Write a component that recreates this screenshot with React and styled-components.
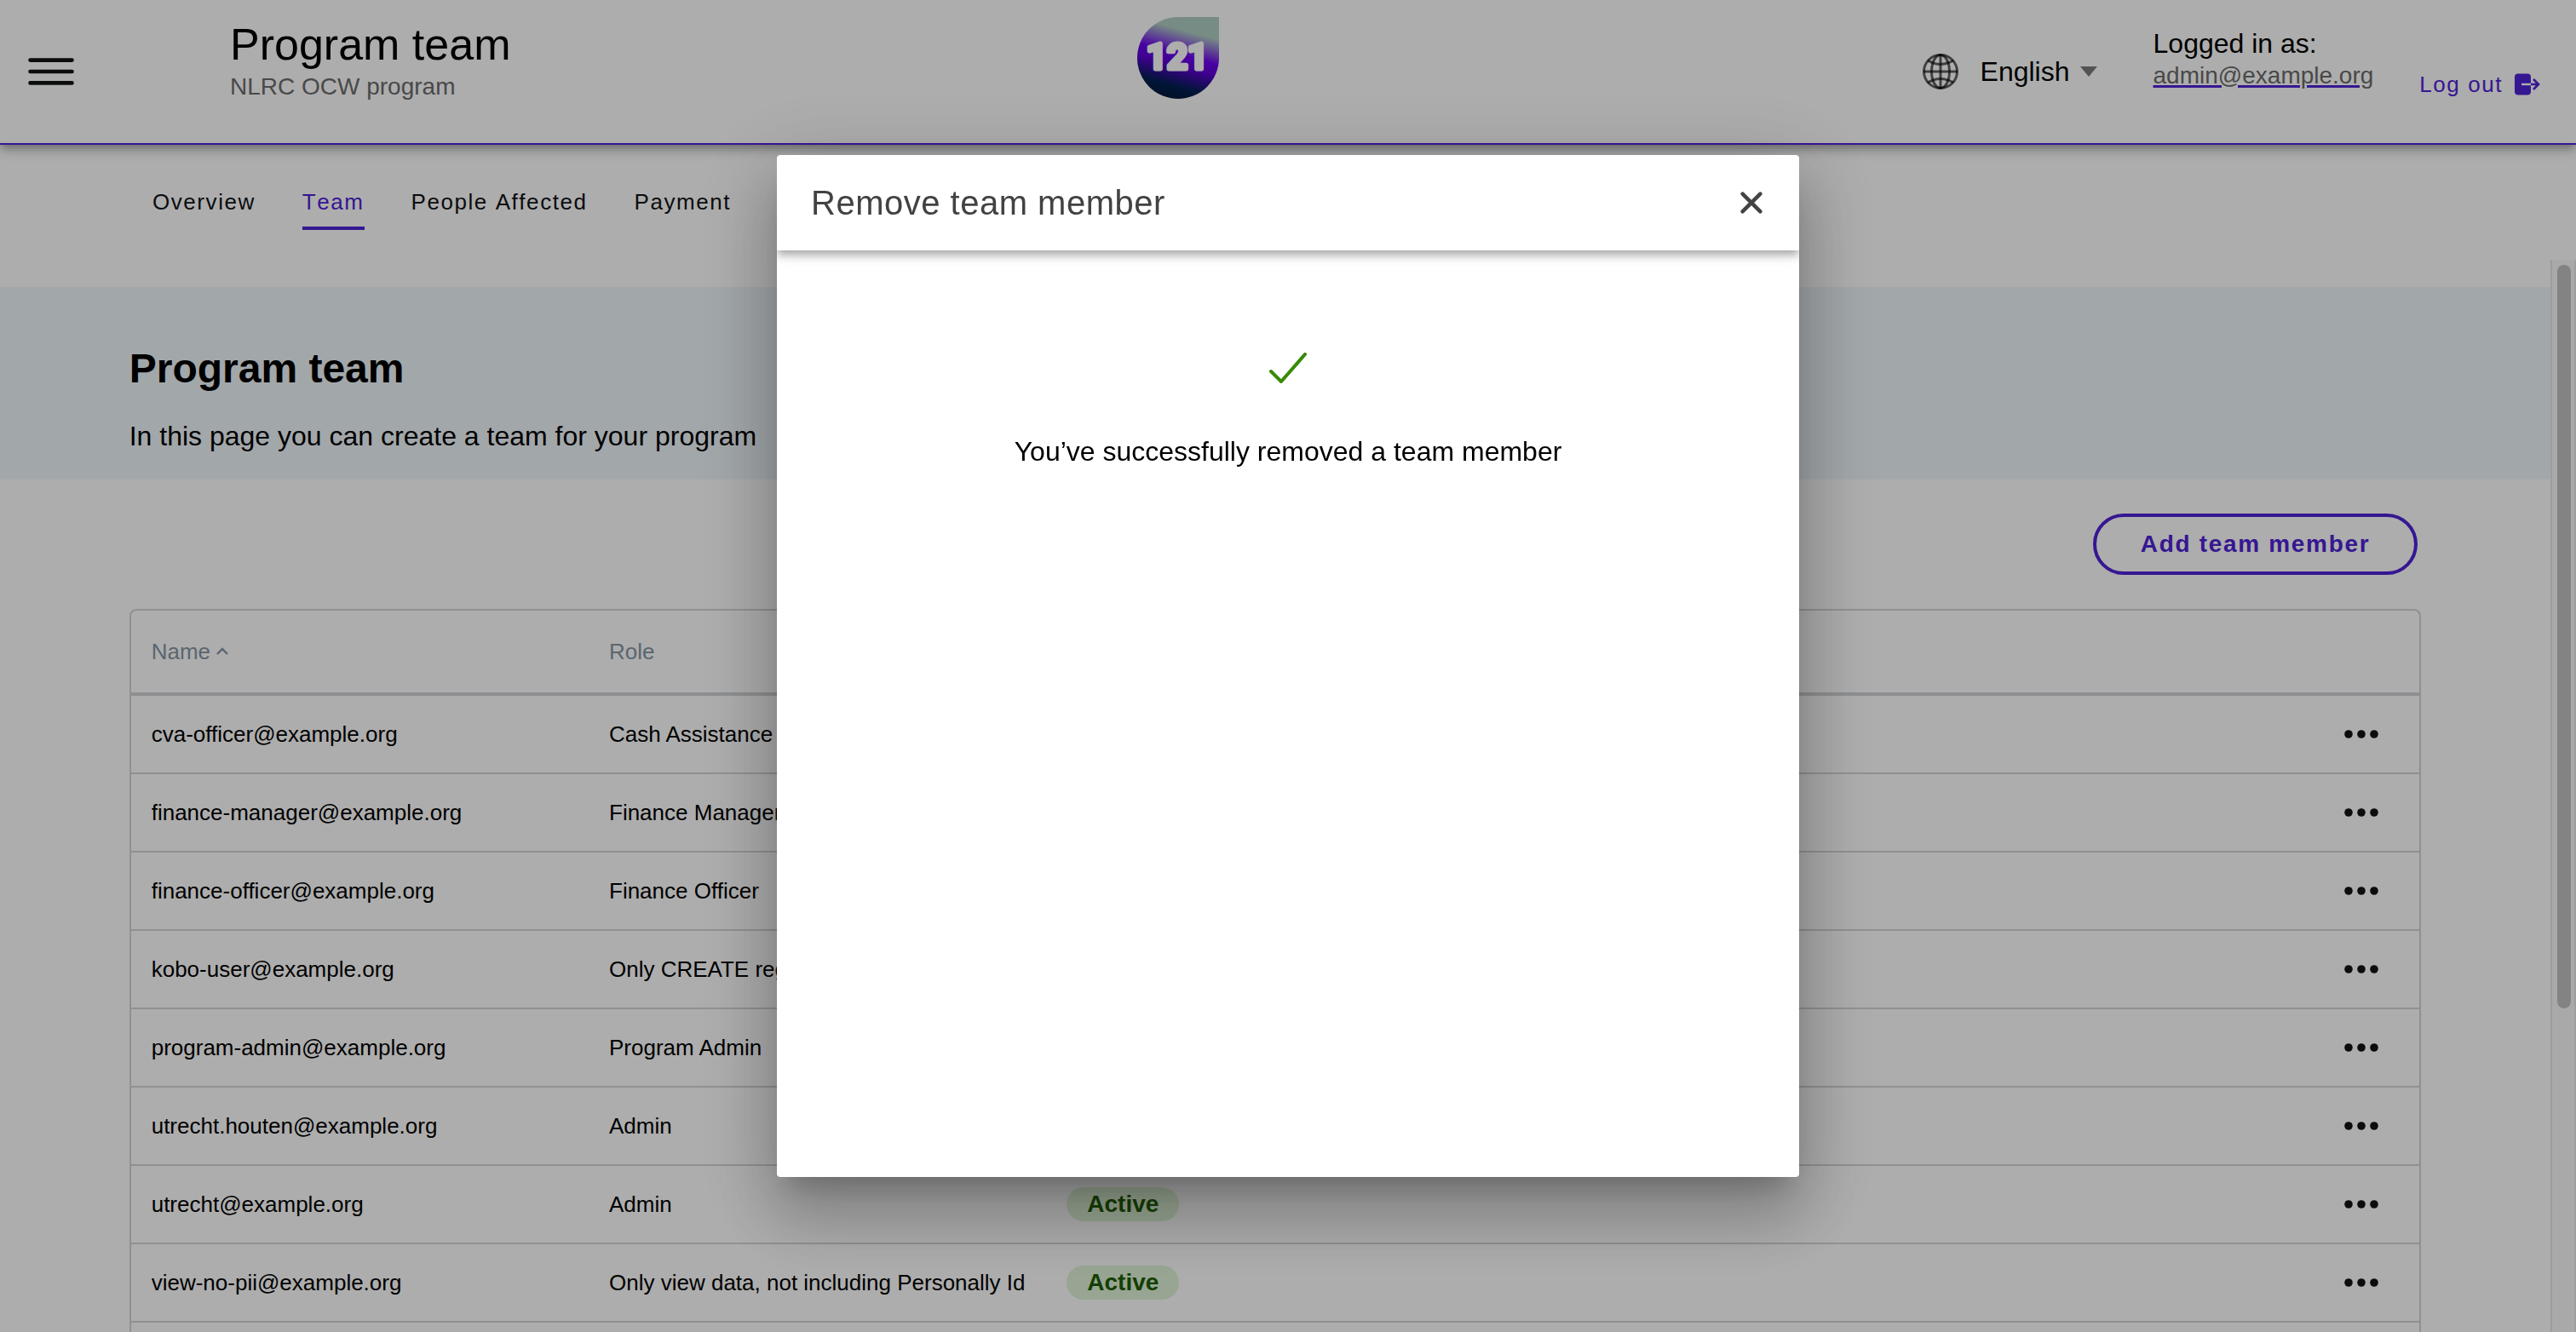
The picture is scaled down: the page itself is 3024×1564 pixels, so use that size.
import React from "react";
import styled, { createGlobalStyle } from "styled-components";

const primary = "#4f22d7";
const line = "#d5d5d6";

const GlobalStyle = createGlobalStyle`
  *, *::before, *::after { box-sizing: border-box; }
  body {
    margin: 0;
    overflow: hidden;
    background: #fff;
    color: #000;
    font-family: "Liberation Sans", Arial, Helvetica, sans-serif;
    font-size: 26px;
  }
  h1, h2, p { margin: 0; }
  svg { display: block; flex: none; }
  button, select { font: inherit; color: inherit; background: none; border: 0; padding: 0; margin: 0; cursor: pointer; }
`;

const Page = styled.div`
  display: flex;
  flex-direction: column;
  height: 100vh;
`;

const Header = styled.header`
  display: grid;
  grid-template-columns: 19fr 24fr;
  align-items: center;
  height: 170px;
  flex: none;
  padding: 0 42px 0 32px;
  border-bottom: 2px solid ${primary};
  box-shadow: 0 4px 8px -2px rgba(0, 0, 0, 0.2), 0 8px 10px rgba(0, 0, 0, 0.14), 0 2px 20px rgba(0, 0, 0, 0.12);
`;

const HeaderGroup = styled.div`
  display: flex;
  align-items: center;
  gap: ${(p) => p.$gap}px;
  height: 100%;
`;

const IconButton = styled.button`
  display: flex;
  align-items: center;
  justify-content: center;
`;

const TitleBlock = styled.div`
  padding-bottom: 24px;
`;

const AppTitle = styled.p`
  font-size: 52px;
  line-height: 60px;
`;

const ProgramName = styled.p`
  font-size: 28px;
  line-height: 40px;
  color: #6c6c6c;
`;

const Logo = styled.a`
  padding-bottom: 32px;
  margin-right: auto;
`;

const Language = styled.label`
  display: flex;
  align-items: center;
  gap: 26px;
  margin-right: 66px;
`;

const LanguageField = styled.span`
  display: flex;
  align-items: center;
  gap: 12px;
`;

const LanguageSelect = styled.select`
  appearance: none;
  font-size: 32px;
  line-height: 40px;
`;

const Account = styled.div`
  padding-bottom: 30px;
  margin-right: 54px;
  font-size: 32px;
  line-height: 40px;
`;

const Email = styled.p`
  font-size: 28px;
  line-height: 36px;
  color: #6c6c6c;
  text-decoration: underline ${primary} 3px;
`;

const LogoutButton = styled.button`
  display: flex;
  align-items: center;
  gap: 14px;
  padding-top: 30px;
  line-height: 32px;
  letter-spacing: 0.06em;
  color: ${primary};
`;

const Tabs = styled.nav`
  display: flex;
  gap: 55px;
  flex: none;
  padding: 51px 179px 35px;
  font-kerning: none;
`;

const Tab = styled.a`
  padding-bottom: 13px;
  border-bottom: 4px solid ${(p) => (p.$active ? primary : "transparent")};
  line-height: 32px;
  letter-spacing: 0.06em;
  text-decoration: none;
  color: ${(p) => (p.$active ? primary : "#111216")};
`;

const ScrollArea = styled.div`
  display: flex;
  flex: 1;
  min-height: 0;
`;

const Content = styled.main`
  flex: 1;
  min-width: 0;
  padding-top: 32px;
  overflow: hidden;
`;

const ScrollRail = styled.div`
  width: 30px;
  flex: none;
  padding: 6px;
  border: solid #e8e8e8;
  border-width: 0 2px;
  background: #fafafa;
`;

const ScrollThumb = styled.div`
  width: 16px;
  height: 70%;
  border-radius: 8px;
  background: #c1c1c1;
`;

const Intro = styled.section`
  display: flex;
  flex-direction: column;
  gap: 31px;
  padding: 68px calc(5% + 2px) 31px;
  background: #eff6fb;
`;

const PageTitle = styled.h1`
  font-size: 48px;
  line-height: 56px;
`;

const IntroText = styled.p`
  font-size: 32px;
  line-height: 40px;
`;

const TeamSection = styled.section`
  display: flex;
  flex-direction: column;
  gap: 40px;
  padding: 40px calc(5% + 2px);
`;

const AddButton = styled.button`
  align-self: flex-end;
  height: 72px;
  margin-right: 4px;
  padding: 0 52px;
  border: 4px solid ${primary};
  border-radius: 36px;
  font-size: 28px;
  font-weight: bold;
  letter-spacing: 0.06em;
  color: ${primary};
`;

const TableFrame = styled.div`
  border: 2px solid ${line};
  border-radius: 8px;
`;

const Table = styled.table`
  width: 100%;
  table-layout: fixed;
  border-collapse: separate;
  border-spacing: 0;
`;

const HeadCell = styled.th`
  height: 100px;
  padding: 0 24px;
  border-bottom: 4px solid #d0d3d6;
  font-weight: normal;
  text-align: left;
  color: #8696a5;
`;

const SortButton = styled.button`
  display: flex;
  align-items: center;
  gap: 7px;
`;

const Cell = styled.td`
  height: 92px;
  padding: 0 24px;
  border-bottom: 2px solid ${line};
`;

const CellText = styled.div`
  overflow: hidden;
  white-space: nowrap;
`;

const Badge = styled.span`
  display: inline-block;
  padding: 0 24px;
  border-radius: 20px;
  background: #dff3d7;
  font-size: 28px;
  font-weight: bold;
  line-height: 40px;
  color: #205c00;
`;

const MenuButton = styled(IconButton)`
  margin: 0 24px 0 auto;
`;

const Backdrop = styled.div`
  position: fixed;
  inset: 0;
  display: flex;
  align-items: center;
  justify-content: center;
  background: rgba(0, 0, 0, 0.32);
`;

const Dialog = styled.section`
  display: flex;
  flex-direction: column;
  width: min(1200px, 90vw);
  height: min(1200px, 90vh);
  border-radius: 4px;
  background: #fff;
  box-shadow: 0 22px 30px -14px rgba(0, 0, 0, 0.2), 0 48px 76px 6px rgba(0, 0, 0, 0.17), 0 18px 92px 16px rgba(0, 0, 0, 0.15);
`;

const DialogHeader = styled.header`
  display: flex;
  align-items: center;
  justify-content: space-between;
  height: 112px;
  flex: none;
  padding: 0 43px 0 40px;
  border-radius: 4px 4px 0 0;
  color: #424242;
  box-shadow: 0 4px 8px -2px rgba(0, 0, 0, 0.2), 0 8px 10px rgba(0, 0, 0, 0.14), 0 2px 20px rgba(0, 0, 0, 0.12);
  clip-path: inset(0 0 -40px 0);
`;

const DialogTitle = styled.h2`
  font-size: 40px;
  font-weight: normal;
  line-height: 48px;
  letter-spacing: 0.0125em;
`;

const DialogBody = styled.div`
  display: flex;
  flex-direction: column;
  align-items: center;
  gap: 60px;
  padding-top: 120px;
  font-size: 32px;
  line-height: 40px;
`;

const MenuIcon = () => (
  <svg width="56" height="32" viewBox="0 0 56 32" stroke="#111216" strokeWidth="4.6" strokeLinecap="round" aria-hidden="true">
    <path d="M3.5 2.6H52.5M3.5 16H52.5M3.5 29.4H52.5" />
  </svg>
);

const LogoMark = () => (
  <svg width="96" height="96" viewBox="0 0 96 96" role="img" aria-label="121">
    <defs>
      <linearGradient id="drop" gradientUnits="userSpaceOnUse" x1="61" y1="0" x2="35" y2="96">
        <stop offset="0.17" stopColor="#b0cec3" />
        <stop offset="0.46" stopColor="#6a00f0" />
        <stop offset="0.58" stopColor="#6000d8" />
        <stop offset="0.84" stopColor="#002050" />
        <stop offset="1" stopColor="#001838" />
      </linearGradient>
    </defs>
    <path d="M48 0H96V48A48 48 0 1 1 48 0Z" fill="url(#drop)" />
    <text x="47" y="61" textAnchor="middle" fontFamily="Roboto, Inter, sans-serif" fontWeight="700" fontSize="42" fill="#fff" stroke="#fff" strokeWidth="5" strokeLinejoin="round">
      121
    </text>
  </svg>
);

const GlobeIcon = () => (
  <svg width="42" height="42" viewBox="0 0 42 42" fill="none" stroke="rgba(0,0,0,0.62)" strokeWidth="3" aria-hidden="true">
    <circle cx="21" cy="21" r="19.5" />
    <ellipse cx="21" cy="21" rx="10.5" ry="19.5" />
    <path d="M21 1V41" />
    <path d="M1 21H41" />
    <path d="M6 8Q21 17 36 8" />
    <path d="M6 34Q21 25 36 34" />
  </svg>
);

const CaretIcon = () => (
  <svg width="20" height="12" viewBox="0 0 20 12" fill="#7b7b7b" aria-hidden="true">
    <path d="M0 0H20L10 12Z" />
  </svg>
);

const LogoutIcon = () => (
  <svg width="30" height="26" viewBox="0 0 30 26" fill="none" aria-hidden="true">
    <rect x="0" y="0.5" width="19" height="25" rx="4" fill={primary} />
    <path d="M8 13H19" stroke="#fff" strokeWidth="2.4" />
    <path d="M19 13H28M22 7L28 13L22 19" stroke={primary} strokeWidth="2.6" />
  </svg>
);

const SortIcon = () => (
  <svg width="14" height="10" viewBox="0 0 14 10" fill="none" stroke="currentColor" strokeWidth="2.4" aria-hidden="true">
    <path d="M1 8L7 2L13 8" />
  </svg>
);

const DotsIcon = () => (
  <svg width="40" height="10" viewBox="0 0 40 10" fill="#111216" aria-hidden="true">
    <circle cx="5" cy="5" r="4.8" />
    <circle cx="20" cy="5" r="4.8" />
    <circle cx="35" cy="5" r="4.8" />
  </svg>
);

const CloseIcon = () => (
  <svg width="26" height="26" viewBox="0 0 26 26" stroke="#424242" strokeWidth="4.4" strokeLinecap="round" aria-hidden="true">
    <path d="M2.6 2.6L23.4 23.4M23.4 2.6L2.6 23.4" />
  </svg>
);

const CheckIcon = () => (
  <svg width="44" height="36" viewBox="0 0 44 36" fill="none" stroke="#388a08" strokeWidth="4" strokeLinecap="round" strokeLinejoin="round" aria-hidden="true">
    <path d="M2 22L14 34L42 2" />
  </svg>
);

const tabs = ["Overview", "Team", "People Affected", "Payment"];

const members = [
  ["cva-officer@example.org", "Cash Assistance Officer"],
  ["finance-manager@example.org", "Finance Manager"],
  ["finance-officer@example.org", "Finance Officer"],
  ["kobo-user@example.org", "Only CREATE registrations"],
  ["program-admin@example.org", "Program Admin"],
  ["utrecht.houten@example.org", "Admin"],
  ["utrecht@example.org", "Admin"],
  ["view-no-pii@example.org", "Only view data, not including Personally Id"],
  ["view-with-pii@example.org", "Only view data"],
];

export default function App() {
  return (
    <>
      <GlobalStyle />
      <Page>
        <Header>
          <HeaderGroup $gap={182}>
            <IconButton aria-label="Menu"><MenuIcon /></IconButton>
            <TitleBlock>
              <AppTitle>Program team</AppTitle>
              <ProgramName>NLRC OCW program</ProgramName>
            </TitleBlock>
          </HeaderGroup>
          <HeaderGroup $gap={0}>
            <Logo href="#home"><LogoMark /></Logo>
            <Language>
              <GlobeIcon />
              <LanguageField>
                <LanguageSelect aria-label="Language" defaultValue="en">
                  <option value="en">English</option>
                </LanguageSelect>
                <CaretIcon />
              </LanguageField>
            </Language>
            <Account>
              <p>Logged in as:</p>
              <Email>admin@example.org</Email>
            </Account>
            <LogoutButton>Log out<LogoutIcon /></LogoutButton>
          </HeaderGroup>
        </Header>
        <Tabs>
          {tabs.map((t) => (
            <Tab key={t} href={"#" + t} $active={t === "Team"}>{t}</Tab>
          ))}
        </Tabs>
        <ScrollArea>
          <Content>
            <Intro>
              <PageTitle>Program team</PageTitle>
              <IntroText>In this page you can create a team for your program</IntroText>
            </Intro>
            <TeamSection>
              <AddButton>Add team member</AddButton>
              <TableFrame>
                <Table>
                  <thead>
                    <tr>
                      <HeadCell><SortButton>Name<SortIcon /></SortButton></HeadCell>
                      <HeadCell>Role</HeadCell>
                      <HeadCell>Status</HeadCell>
                      <HeadCell />
                      <HeadCell />
                    </tr>
                  </thead>
                  <tbody>
                    {members.map(([name, role]) => (
                      <tr key={name}>
                        <Cell><CellText>{name}</CellText></Cell>
                        <Cell><CellText>{role}</CellText></Cell>
                        <Cell><Badge>Active</Badge></Cell>
                        <Cell />
                        <Cell><MenuButton aria-label={"Options for " + name}><DotsIcon /></MenuButton></Cell>
                      </tr>
                    ))}
                  </tbody>
                </Table>
              </TableFrame>
            </TeamSection>
          </Content>
          <ScrollRail><ScrollThumb /></ScrollRail>
        </ScrollArea>
      </Page>
      <Backdrop>
        <Dialog role="dialog" aria-modal="true" aria-labelledby="dialog-title">
          <DialogHeader>
            <DialogTitle id="dialog-title">Remove team member</DialogTitle>
            <IconButton aria-label="Close"><CloseIcon /></IconButton>
          </DialogHeader>
          <DialogBody>
            <CheckIcon />
            <p>You’ve successfully removed a team member</p>
          </DialogBody>
        </Dialog>
      </Backdrop>
    </>
  );
}
